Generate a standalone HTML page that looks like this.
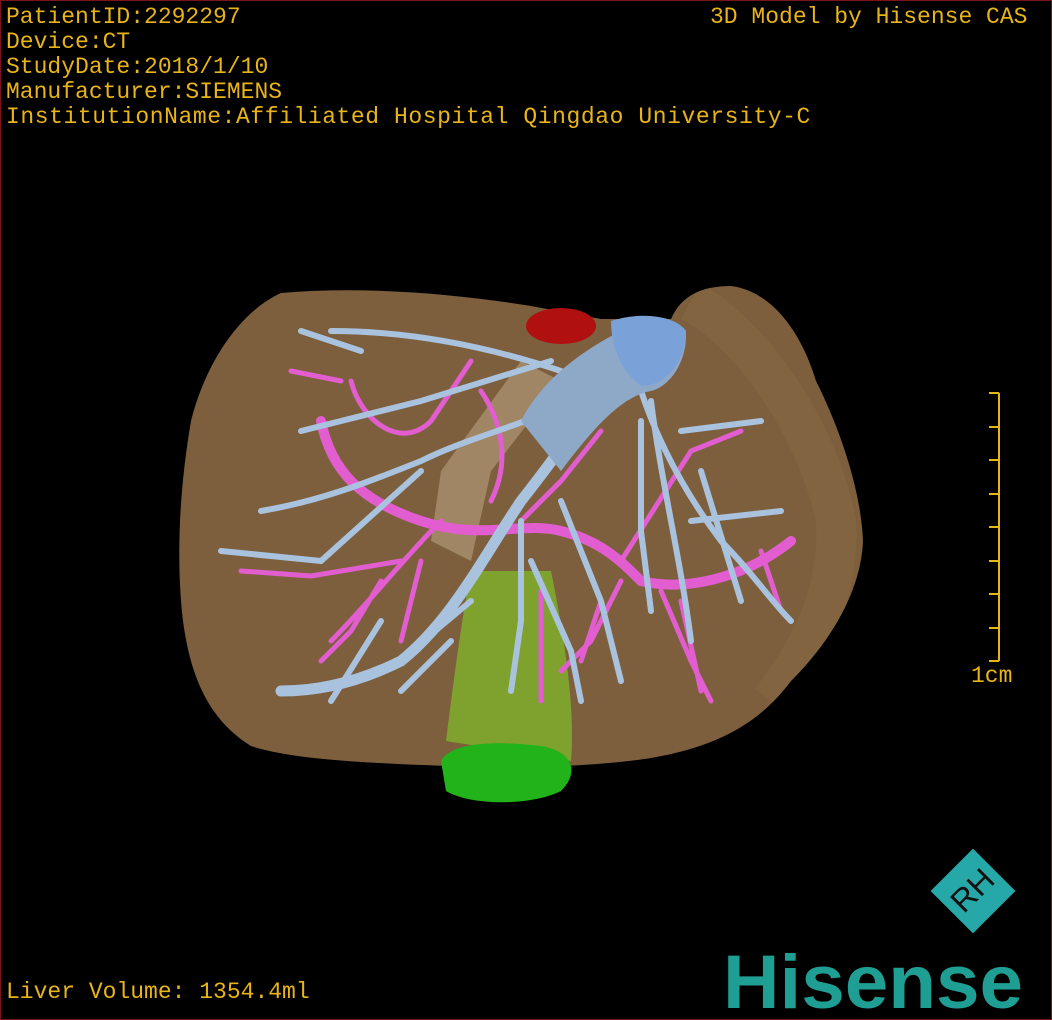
<!DOCTYPE html>
<html><head><style>
html,body{margin:0;padding:0;background:#000;}
#w{position:relative;width:1050px;height:1018px;border:1px solid #7a1418;overflow:hidden;background:#000;}
.t{position:absolute;color:#e8b418;font-family:"Liberation Mono",monospace;font-size:23px;line-height:25px;white-space:pre;}
</style></head><body><div id="w">
<div class="t" style="left:5px;top:4px">PatientID:2292297<br>Device:CT<br>StudyDate:2018/1/10<br>Manufacturer:SIEMENS<br><span style="letter-spacing:0.57px">InstitutionName:Affiliated Hospital Qingdao University-C</span></div>
<div class="t" style="left:709px;top:4px">3D Model by Hisense CAS</div>
<div class="t" style="left:5px;top:979px">Liver Volume: 1354.4ml</div>
<div class="t" style="left:970px;top:663px">1cm</div>
<svg style="position:absolute;left:0;top:0" width="1050" height="1018">
<defs><clipPath id="lv"><path id="lp" d="M280 292 C360 285 450 292 530 305 L600 318 L670 318 C680 295 700 285 730 285 C770 290 800 330 815 380 C840 430 860 490 862 540 C860 590 830 640 790 680 C760 720 720 745 650 757 C600 765 520 768 450 765 C360 762 290 758 250 745 C210 720 190 680 182 620 C175 560 178 490 190 420 C205 360 240 310 280 292Z"/></clipPath></defs>
<g stroke="#e8b418" stroke-width="2" fill="none">
<path d="M998 392V660"/><path d="M988 392h10M988 426h10M988 459h10M988 493h10M988 526h10M988 560h10M988 593h10M988 627h10M988 660h10"/>
</g>
<path d="M280 292 C360 285 450 292 530 305 L600 318 L670 318 C680 295 700 285 730 285 C770 290 800 330 815 380 C840 430 860 490 862 540 C860 590 830 640 790 680 C760 720 720 745 650 757 C600 765 520 768 450 765 C360 762 290 758 250 745 C210 720 190 680 182 620 C175 560 178 490 190 420 C205 360 240 310 280 292Z" fill="#7d5f3d"/>
<path clip-path="url(#lv)" d="M690 300 C760 340 820 440 835 520 C840 600 800 660 770 700" stroke="#8e7048" stroke-width="40" fill="none" opacity="0.3"/>
<ellipse cx="560" cy="325" rx="35" ry="18" fill="#b01010"/>
<path d="M520 360 L440 470 L430 540 L470 560 L490 470 L560 380Z" fill="#b8a080" opacity="0.6"/>
<path d="M470 570 C460 620 450 700 445 740 L570 760 C575 700 560 620 550 570Z" fill="#7fae2c" opacity="0.85"/>
<path d="M440 760 C450 740 500 740 540 745 C570 750 580 770 560 790 C530 805 470 805 445 790Z" fill="#22b21a"/>
<g stroke="#e25ed0" stroke-linecap="round" fill="none">
<path d="M320 420 C330 470 360 500 420 520 C480 540 520 520 560 530 C600 540 620 560 640 580 C680 590 740 580 790 540" stroke-width="10"/>
<path d="M490 500 C510 460 500 420 480 390 M520 520 L560 480 L600 430 M440 520 C400 560 370 600 330 640 M400 560 L310 575 L240 570 M620 580 L590 640 L560 670 M660 590 L690 660 L710 700 M620 560 L690 450 L740 430 M340 380 L290 370 M350 380 C360 420 400 450 430 420 L470 360 M540 590 L540 700 M420 560 L400 640 M760 550 L780 610 M380 580 L350 630 L320 660 M680 600 L700 690 M600 600 L580 660" stroke-width="5"/>
</g>
<g stroke="#a9c2de" stroke-linecap="round" fill="none">
<path d="M650 350 C590 400 560 450 520 500 C480 560 450 620 400 660 C360 680 320 690 280 690" stroke-width="11"/>
<path d="M600 380 C550 420 480 430 420 460 C370 480 320 500 260 510 M560 370 C500 350 420 330 330 330 M550 360 L420 400 L300 430 M470 600 L410 650 M640 390 C660 450 690 500 720 540 C750 570 770 600 790 620 M650 400 C660 480 680 560 690 640 M680 430 L760 420 M690 520 L780 510 M520 520 L520 620 L510 690 M560 500 L600 600 L620 680 M420 470 L320 560 L220 550 M380 620 L330 700 M640 420 L640 530 L650 610 M700 470 L740 600 M530 560 L570 650 L580 700 M450 640 L400 690 M300 330 L360 350" stroke-width="6"/>
</g>
<path d="M520 420 C540 380 580 350 620 330 C650 315 680 315 685 335 C685 360 670 385 650 390 C620 395 590 430 560 470 Z" fill="#8ea8c8"/>
<path d="M610 320 C640 310 675 315 685 330 C685 360 665 385 640 385 C620 370 610 345 610 320Z" fill="#7aa2d8"/>
<g transform="translate(972 890) rotate(-45)">
<rect x="-30" y="-30" width="60" height="60" fill="#26a8a8"/>
<text x="0" y="10" font-family="Liberation Sans" font-size="32" fill="#111" text-anchor="middle">RH</text>
</g>
<text x="722" y="1007" font-family="Liberation Sans" font-weight="bold" font-size="76" fill="#1f9e93" textLength="300" lengthAdjust="spacingAndGlyphs">Hisense</text>
</svg>
</div></body></html>
